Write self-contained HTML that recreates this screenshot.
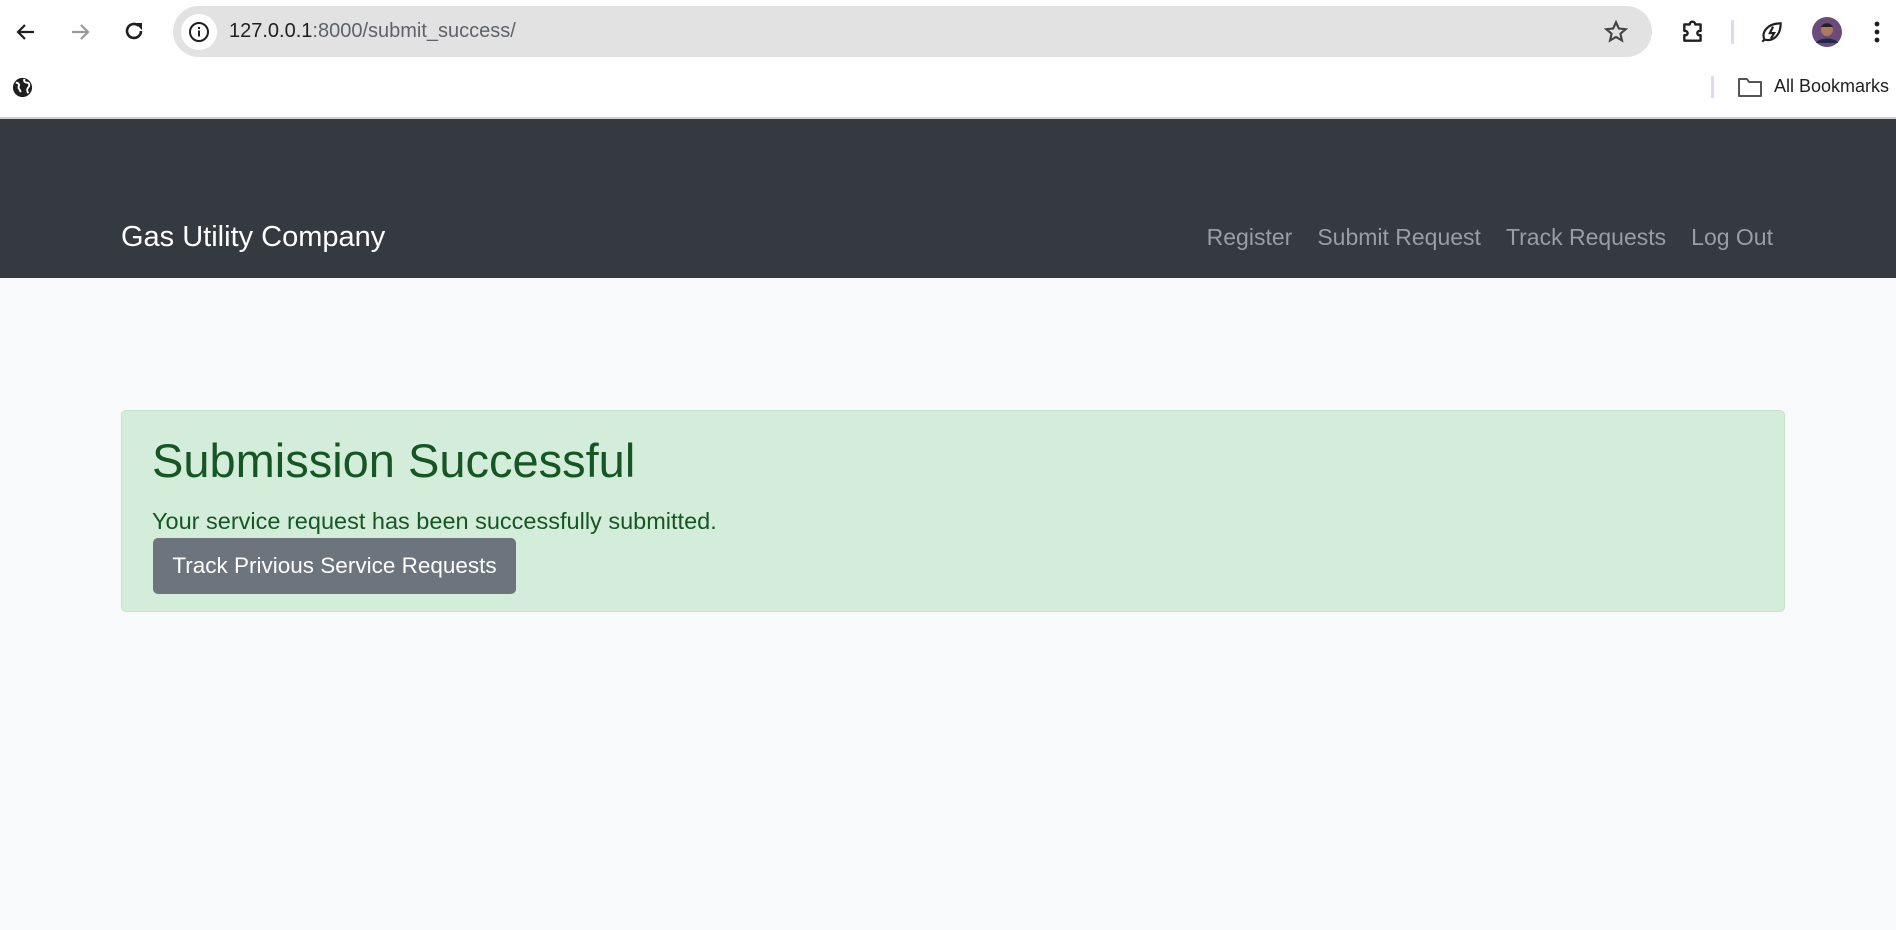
<!DOCTYPE html>
<html><head><meta charset="utf-8"><style>
*{margin:0;padding:0;box-sizing:border-box}
body{width:1896px;height:930px;overflow:hidden;background:#f8f9fa;font-family:"Liberation Sans",sans-serif;position:relative}
.top{position:absolute;left:0;top:0;width:1896px;height:117px;background:#fff}
.sep{position:absolute;left:0;top:117px;width:1896px;height:2px;background:#d0d0d0}
.addr{position:absolute;left:173px;top:6px;width:1479px;height:51px;background:#e2e2e2;border-radius:26px}
.info{position:absolute;left:181px;top:14px;width:36px;height:36px;border-radius:50%;background:#fff}
.url{position:absolute;left:229px;top:20px;font-size:20px;color:#5f6368;white-space:nowrap}
.url b{font-weight:normal;color:#1f1f1f}
svg{position:absolute}
.nav{position:absolute;left:0;top:119px;width:1896px;height:159px;background:#343a40}
.brand{position:absolute;left:121px;top:221px;font-size:29px;color:#fff}
.links{position:absolute;right:123px;top:224px;font-size:23px;color:#9a9da1;display:flex;gap:25px}
.alert{position:absolute;left:121px;top:410px;width:1664px;height:202px;background:#d4edda;border:1px solid #c3e6cb;border-radius:5px;color:#155724}
.alert h1{position:absolute;left:30px;top:22px;font-size:47px;font-weight:normal;white-space:nowrap}
.alert p{position:absolute;left:30px;top:97px;font-size:23.5px;white-space:nowrap}
.btn{position:absolute;left:31px;top:127px;width:363px;height:56px;background:#6c757d;border-radius:5px;color:#fff;font-size:22.5px;line-height:56px;text-align:center;white-space:nowrap}
</style></head><body>
<div class="top"></div><div class="sep"></div>
<svg style="left:14px;top:20px" width="24" height="24" viewBox="0 0 24 24"><path d="M20 12H5M11 5l-7 7 7 7" stroke="#1f1f1f" stroke-width="2.2" fill="none"/></svg>
<svg style="left:68px;top:20px" width="24" height="24" viewBox="0 0 24 24"><path d="M4 12h15M13 5l7 7-7 7" stroke="#9a9a9a" stroke-width="2.2" fill="none"/></svg>
<svg style="left:122px;top:19px" width="24" height="24" viewBox="0 0 24 24"><path d="M19 12a7 7 0 1 1-2.5-5.4" stroke="#1f1f1f" stroke-width="2.6" fill="none"/><path d="M13 4h7v7z" fill="#1f1f1f"/></svg>
<div class="addr"></div><div class="info"></div>
<svg style="left:188px;top:21px" width="22" height="22" viewBox="0 0 22 22"><circle cx="11" cy="11" r="9" stroke="#1f1f1f" stroke-width="2" fill="none"/><rect x="10" y="9.5" width="2" height="6" fill="#1f1f1f"/><rect x="10" y="6" width="2" height="2" fill="#1f1f1f"/></svg>
<div class="url"><b>127.0.0.1</b>:8000/submit_success/</div>
<svg style="left:1603px;top:19px" width="26" height="26" viewBox="0 0 24 24"><path d="M12 3l2.6 5.8 6.3.6-4.8 4.2 1.4 6.2L12 16.6 6.5 19.8l1.4-6.2L3.1 9.4l6.3-.6z" stroke="#444" stroke-width="2" fill="none"/></svg>
<svg style="left:1680px;top:19px" width="26" height="26" viewBox="0 0 24 24"><path d="M4 5h5a2.5 2.5 0 0 1 5 0h5v6h-1a2 2 0 0 0 0 4h1v5H4v-5h1a2 2 0 0 0 0-4H4z" stroke="#1f1f1f" stroke-width="2.2" fill="none" stroke-linejoin="round"/></svg>
<div style="position:absolute;left:1731px;top:20px;width:3px;height:24px;background:#e3d4fb"></div>
<svg style="left:1759px;top:19px" width="26" height="26" viewBox="0 0 24 24"><path d="M5 19C2 12 8 4 20 4c0 12-8 17-15 15zM5 19l-2 2M13 7l-3 6h4l-3 5" stroke="#1f1f1f" stroke-width="2" fill="none"/></svg>
<svg style="left:1812px;top:17px" width="30" height="30" viewBox="0 0 30 30"><circle cx="15" cy="15" r="15" fill="#6a4b7a"/><circle cx="15" cy="13" r="6" fill="#b07860"/><path d="M4 26c3-6 19-6 22 0" fill="#1b2a4a"/><path d="M9 10c2-5 10-5 12 0" fill="#222"/></svg>
<svg style="left:1872px;top:20px" width="10" height="26" viewBox="0 0 10 26"><circle cx="5" cy="4" r="2.4" fill="#1f1f1f"/><circle cx="5" cy="12" r="2.4" fill="#1f1f1f"/><circle cx="5" cy="20" r="2.4" fill="#1f1f1f"/></svg>
<svg style="left:11px;top:76px" width="23" height="23" viewBox="0 0 24 24"><circle cx="12" cy="12" r="10" fill="#1f1f1f"/><path d="M5 7c3 0 4 2 3 4s2 3 2 6M14 3c-1 3 1 4 3 4s3 3 1 5-1 4 0 6" stroke="#fff" stroke-width="2" fill="none"/></svg>
<div style="position:absolute;left:1711px;top:76px;width:3px;height:22px;background:#e3d4fb"></div>
<svg style="left:1737px;top:76px" width="26" height="22" viewBox="0 0 26 22"><path d="M2 3h8l2 3h12v14H2z" stroke="#555" stroke-width="2" fill="none" stroke-linejoin="round"/></svg>
<div style="position:absolute;left:1774px;top:76px;font-size:18px;color:#1f1f1f;white-space:nowrap">All Bookmarks</div>
<div class="nav"></div>
<div class="brand">Gas Utility Company</div>
<div class="links"><span>Register</span><span>Submit Request</span><span>Track Requests</span><span>Log Out</span></div>
<div class="alert"><h1>Submission Successful</h1><p>Your service request has been successfully submitted.</p><div class="btn">Track Privious Service Requests</div></div>
</body></html>
